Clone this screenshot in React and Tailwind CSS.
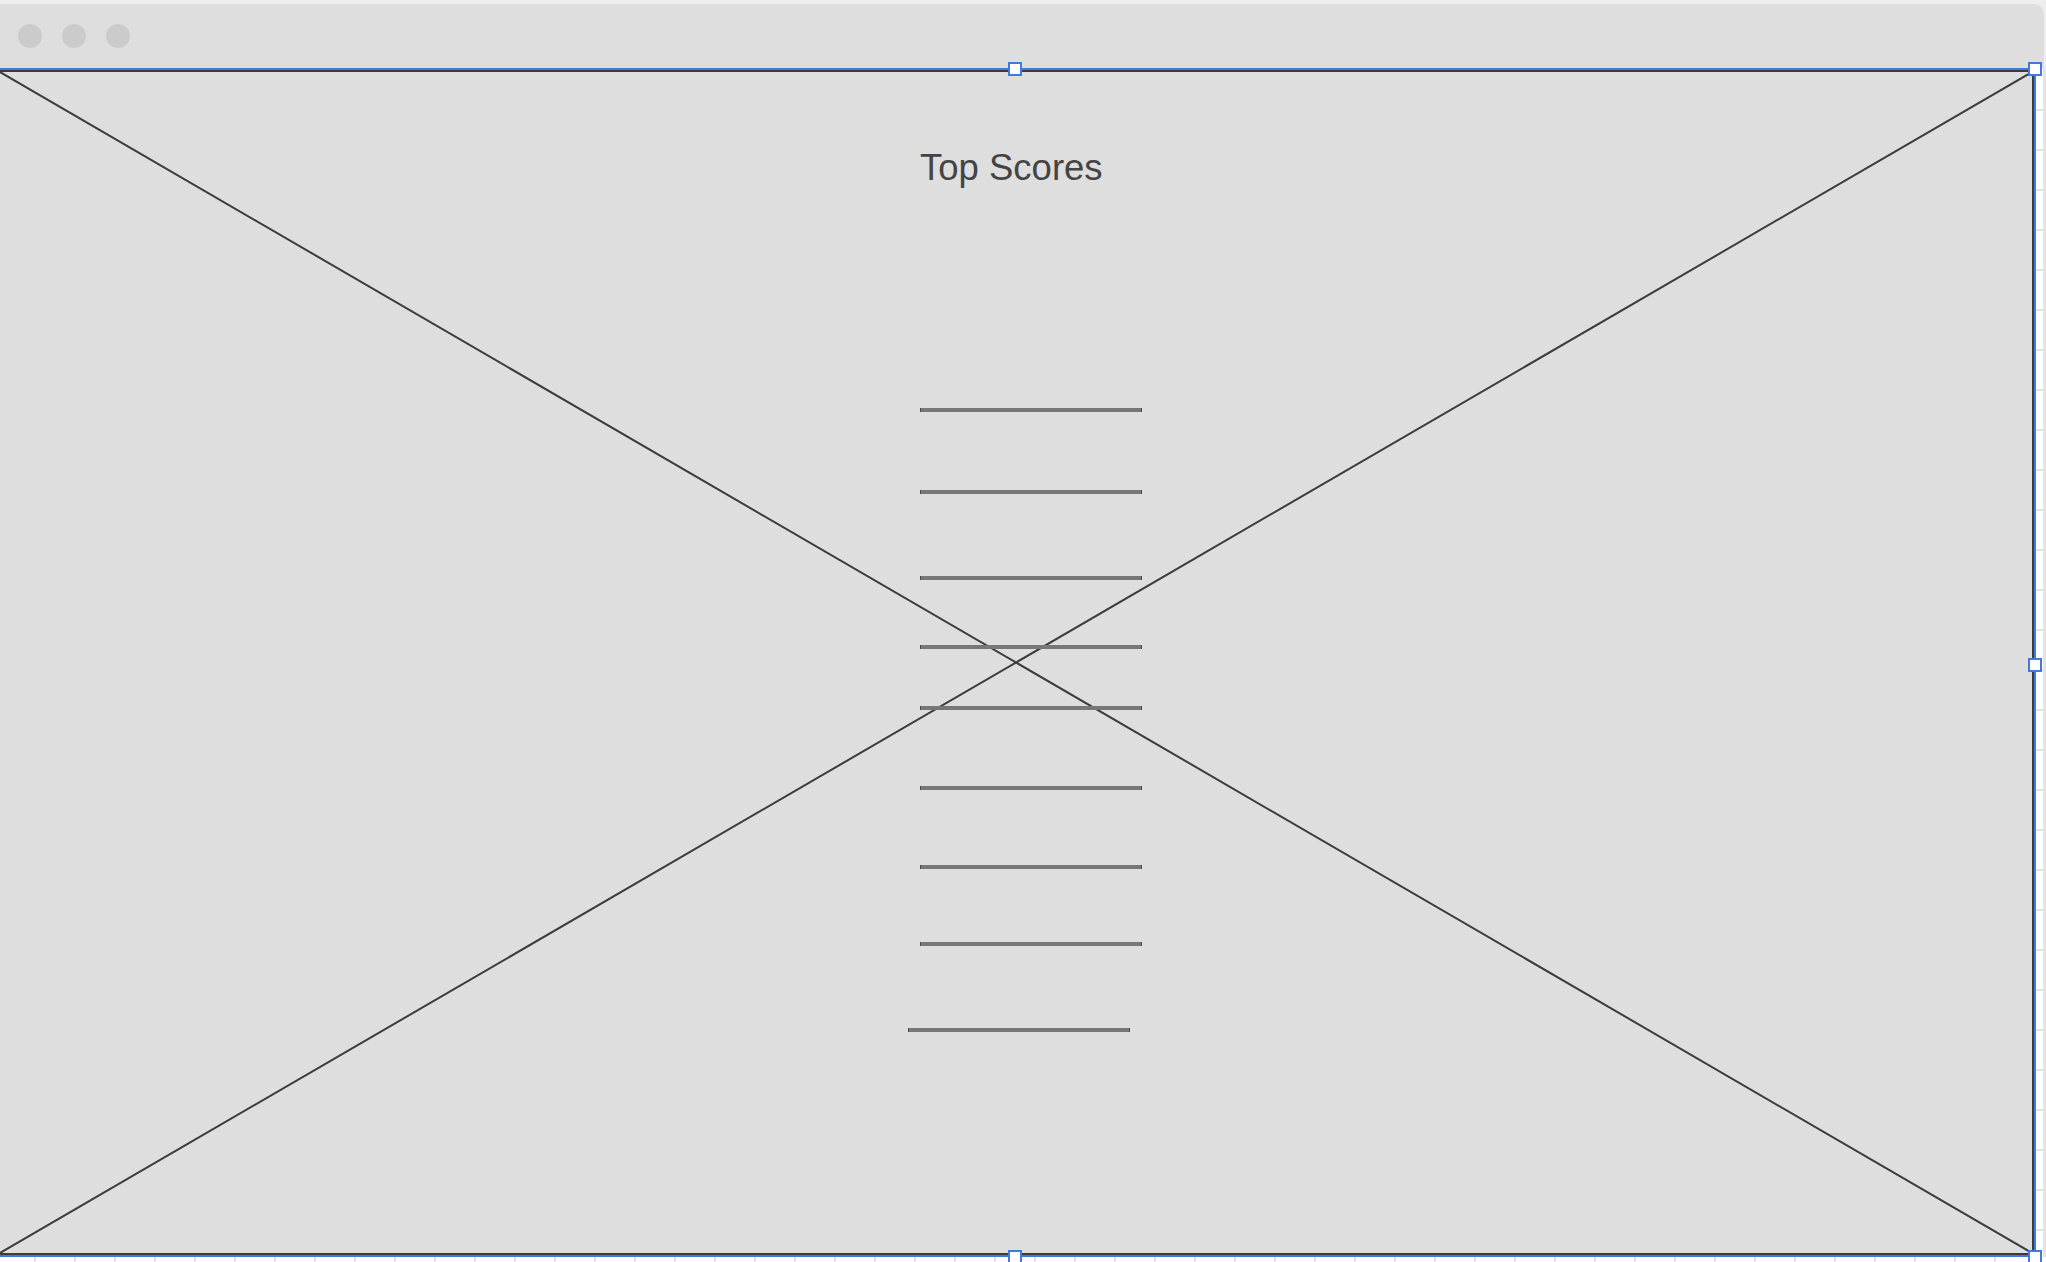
import React from "react";

const lineGaps = [222, 78, 82, 65, 57, 76, 75, 73];
const rulerX = Array.from({ length: 51 }, (_, i) => i);
const rulerY = Array.from({ length: 30 }, (_, i) => i);

const Handle = ({ className }) => (
  <div
    className={`absolute h-[14px] w-[14px] border-2 border-[#4179e0] bg-white z-10 ${className}`}
  />
);

const ScoreLine = ({ mt, shift }) => (
  <div
    className={`h-[4px] w-[222px] border-x border-[#4a4a4a] bg-[#777777] ${shift ? "-ml-[12px]" : ""}`}
    style={{ marginTop: mt }}
  />
);

const App = () => {
  return (
    <div className="h-[1262px] w-[2046px] overflow-hidden bg-[#eeeeee] pt-[4px] font-['Liberation_Sans',Arial,sans-serif]">
      {/* window title bar */}
      <div className="flex h-[64px] w-[2044px] items-center gap-[20px] rounded-tr-[10px] bg-[#dedede] pl-[18px]">
        <div className="h-[24px] w-[24px] rounded-full bg-[#cbcbcb]" />
        <div className="h-[24px] w-[24px] rounded-full bg-[#cbcbcb]" />
        <div className="h-[24px] w-[24px] rounded-full bg-[#cbcbcb]" />
      </div>

      <div className="flex h-[1189px]">
        {/* selected canvas */}
        <div className="relative w-[2036px] border-y-2 border-r-2 border-[#4179e0] bg-[#dedede]">
          <div className="relative h-full border-y-2 border-r-2 border-[#3c3c3c]">
            <svg className="absolute inset-0 h-full w-full" preserveAspectRatio="none">
              <line x1="0" y1="0" x2="100%" y2="100%" stroke="#3c3c3c" strokeWidth="2" />
              <line x1="100%" y1="0" x2="0" y2="100%" stroke="#3c3c3c" strokeWidth="2" />
            </svg>
            <div className="relative ml-[920px] flex flex-col pt-[78px]">
              <h1 className="text-[36.5px] leading-[36px] text-[#444444]">Top Scores</h1>
              {lineGaps.map((g, i) => (
                <ScoreLine key={i} mt={g} />
              ))}
              <ScoreLine mt={82} shift />
            </div>
          </div>
          <Handle className="left-[1008px] -top-[8px]" />
          <Handle className="left-[2028px] -top-[8px]" />
          <Handle className="left-[2028px] top-[588px]" />
          <Handle className="left-[1008px] top-[1180px]" />
          <Handle className="left-[2028px] top-[1180px]" />
        </div>

        {/* right ruler */}
        <div className="flex w-[10px] bg-white">
          <div className="flex w-[7px] flex-col gap-[38px] pt-[41px]">
            {rulerY.map((i) => (
              <div key={i} className="h-[2px] w-full shrink-0 bg-[#e2e2e2]" />
            ))}
          </div>
          <div className="w-[3px] bg-[#e4e4e4]" />
        </div>
      </div>

      {/* bottom ruler */}
      <div className="flex h-[5px] gap-[38px] bg-white pl-[34px]">
        {rulerX.map((i) => (
          <div key={i} className="h-full w-[2px] shrink-0 bg-[#e2e2e2]" />
        ))}
      </div>
    </div>
  );
};

export default App;
